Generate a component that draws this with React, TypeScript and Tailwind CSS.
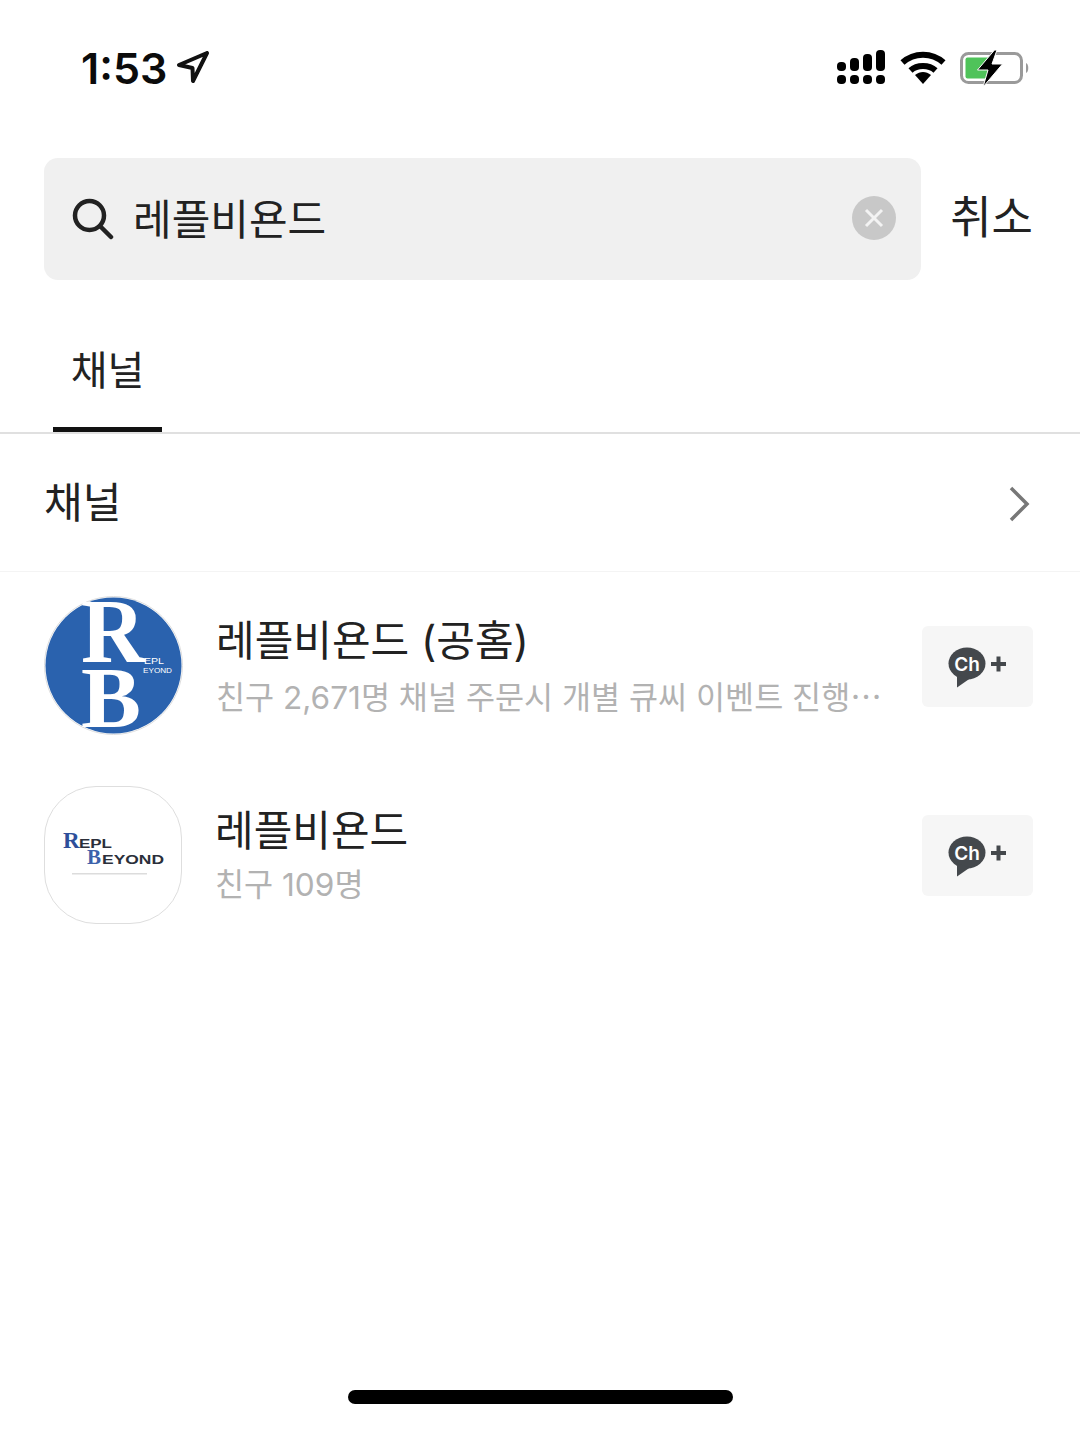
const KR = { fontFamily: '"Noto Sans CJK KR", "Noto Sans", sans-serif' };
const MIX = { fontFamily: 'Inter, "Noto Sans CJK KR", sans-serif' };

function Signal() {
  return (
    <svg width="50" height="36" viewBox="0 0 50 36" fill="#000">
      <rect x="1" y="12" width="9" height="9" rx="4" />
      <rect x="14" y="8" width="9" height="13" rx="4" />
      <rect x="27" y="4" width="9" height="17" rx="4" />
      <rect x="40" y="0" width="9" height="21" rx="4" />
      <rect x="1" y="25" width="9" height="9" rx="4" />
      <rect x="14" y="25" width="9" height="9" rx="4" />
      <rect x="27" y="25" width="9" height="9" rx="4" />
      <rect x="40" y="25" width="9" height="9" rx="4" />
    </svg>
  );
}

function Wifi() {
  return (
    <svg width="46" height="34" viewBox="0 0 46 34" fill="none" stroke="#000" strokeWidth="6">
      <path d="M2.5 11.5 C14 1 32 1 43.5 11.5" />
      <path d="M10.5 19.5 C17 13.5 29 13.5 35.5 19.5" />
      <path d="M15 24 L23 33 L31 24 C26 20 20 20 15 24 Z" fill="#000" stroke="none" />
    </svg>
  );
}

function Battery() {
  return (
    <svg width="72" height="42" viewBox="0 0 72 42" fill="none">
      <rect x="3.5" y="6.5" width="60" height="29" rx="7" stroke="#9a9a9a" strokeWidth="3" />
      <rect x="7.5" y="10.5" width="24" height="21" rx="2" fill="#4fc35a" />
      <path d="M68 16 C71 17 71 25 68 26 Z" fill="#9a9a9a" />
      <path d="M36.5 3 L19.5 23 L30 23 L25 40 L44.5 17 L34 17 L39 3 Z" fill="#000" stroke="#fff" strokeWidth="1" strokeLinejoin="round" />
    </svg>
  );
}

function ChButton() {
  return (
    <div className="w-[111px] h-[81px] bg-[#f6f6f6] rounded-[6px] flex items-center justify-center shrink-0">
      <svg width="60" height="46" viewBox="1 -2.5 60 46">
        <ellipse cx="20" cy="18" rx="18.5" ry="16" fill="#44484c" />
        <path d="M10 29 L10 42 L23 33 Z" fill="#44484c" />
        <text x="20" y="25" textAnchor="middle" fontSize="19" fontWeight="600" fill="#fff" fontFamily="Inter, sans-serif">Ch</text>
        <rect x="44" y="16.5" width="15" height="4" fill="#44484c" />
        <rect x="49.5" y="11" width="4" height="15" fill="#44484c" />
      </svg>
    </div>
  );
}

function LogoRB() {
  return (
    <svg width="139" height="139" viewBox="0 0 139 139" className="shrink-0">
      <circle cx="69.5" cy="69.5" r="69" fill="#fff" stroke="#dedede" strokeWidth="1" />
      <circle cx="69.5" cy="69.5" r="68" fill="#2a62ae" />
      <text x="37" y="66" fontFamily='"Liberation Serif", serif' fontWeight="700" fontSize="90" fill="#fff" textLength="64" lengthAdjust="spacingAndGlyphs">R</text>
      <text x="37" y="131" fontFamily='"Liberation Serif", serif' fontWeight="700" fontSize="86" fill="#fff" textLength="60" lengthAdjust="spacingAndGlyphs">B</text>
      <text x="100" y="68" fontFamily='"Liberation Sans", sans-serif' fontSize="9" fill="#fff" textLength="20" lengthAdjust="spacingAndGlyphs">EPL</text>
      <text x="99" y="77" fontFamily='"Liberation Sans", sans-serif' fontSize="8" fill="#fff" textLength="29" lengthAdjust="spacingAndGlyphs">EYOND</text>
    </svg>
  );
}

function LogoText() {
  return (
    <div className="w-[138px] h-[138px] rounded-[52px] border border-[#dedede] bg-white shrink-0 flex items-center justify-center">
      <svg width="120" height="60" viewBox="0 0 120 60">
        <text x="10" y="23" fontFamily='"Liberation Serif", serif' fontWeight="700" fontSize="23" fill="#2d4f9a">R</text>
        <text x="26" y="23" fontFamily='"Liberation Sans", sans-serif' fontWeight="700" fontSize="13" fill="#2b2f3a" textLength="33" lengthAdjust="spacingAndGlyphs">EPL</text>
        <text x="34" y="39" fontFamily='"Liberation Serif", serif' fontWeight="700" fontSize="21" fill="#3c62ab">B</text>
        <text x="49" y="39" fontFamily='"Liberation Sans", sans-serif' fontWeight="700" fontSize="13" fill="#2b2f3a" textLength="62" lengthAdjust="spacingAndGlyphs">EYOND</text>
        <rect x="19" y="48" width="75" height="1.5" fill="#dcdcdc" />
      </svg>
    </div>
  );
}

function Row({ logo, name, sub, more }: { logo: React.ReactNode; name: string; sub: string; more?: boolean }) {
  return (
    <div className="flex items-center pl-[44px] pr-[47px] h-[139px]">
      {logo}
      <div className="ml-[33px] flex-1 min-w-0 flex flex-col" style={MIX}>
        <div className="text-[42px] leading-[50px] text-[#222] mt-[2px]">{name}</div>
        <div className="text-[31.6px] leading-[40px] mt-[9px] text-[#b2b2b2] whitespace-nowrap">
          {sub}
          {more && <span style={KR}>…</span>}
        </div>
      </div>
      <div className="ml-[40px] flex mt-[1px]"><ChButton /></div>
    </div>
  );
}

export default function App() {
  return (
    <div className="w-[1080px] h-[1440px] bg-white flex flex-col overflow-hidden" style={KR}>
      <div className="h-[138px] flex items-center justify-between pl-[81px] pr-[50px] pb-[2px]">
        <div className="flex items-center gap-[9px]">
          <span className="text-[43px] leading-none font-semibold text-[#0b0b0b]" style={{ fontFamily: 'Inter, sans-serif' }}>1:53</span>
          <svg width="34" height="34" viewBox="0 0 34 34" fill="none" stroke="#111" strokeWidth="4" strokeLinejoin="round" strokeLinecap="round">
            <path d="M3 14 L31 2 L17 30 L16.5 17 Z" />
          </svg>
        </div>
        <div className="flex items-center gap-[14px]">
          <Signal />
          <Wifi />
          <div className="-ml-[2px]"><Battery /></div>
        </div>
      </div>

      <div className="mt-[20px] flex items-center pl-[44px] pr-[47px]">
        <div className="w-[877px] h-[122px] rounded-[14px] bg-[#f0f0f0] flex items-center pl-[28px] pr-[25px]">
          <svg width="42" height="42" viewBox="0 0 42 42" fill="none" stroke="#222" strokeWidth="4.5" strokeLinecap="round">
            <circle cx="17.5" cy="17.5" r="14.5" />
            <path d="M28 28 L39 39" />
          </svg>
          <span className="ml-[19px] text-[42px] leading-none text-[#222] -mt-[4px]">레플비욘드</span>
          <div className="ml-auto w-[44px] h-[44px] rounded-full bg-[#c8c8c8] flex items-center justify-center -mt-[3px]">
            <svg width="22" height="22" viewBox="0 0 22 22" stroke="#f3f3f3" strokeWidth="3">
              <path d="M3 3 L19 19 M19 3 L3 19" />
            </svg>
          </div>
        </div>
        <span className="ml-auto text-[45px] leading-none text-[#222] -mt-[9px]">취소</span>
      </div>

      <div className="mt-[47px] h-[107px] border-b-2 border-[#e0e0e0] pl-[53px] flex">
        <div className="w-[109px] h-[105px] border-b-[5px] border-[#111] flex justify-center pt-[15px]">
          <span className="text-[40px] leading-[52px] text-[#222]">채널</span>
        </div>
      </div>

      <div className="h-[138px] border-b border-[#f4f4f4] flex items-center justify-between pl-[44px] pr-[48px]">
        <span className="text-[42px] leading-none text-[#222] -mt-[5px]">채널</span>
        <svg width="24" height="36" viewBox="0 0 24 36" fill="none" stroke="#777" strokeWidth="3.5" className="mr-[1px] mt-[2px]">
          <path d="M4 2 L20 18 L4 34" />
        </svg>
      </div>

      <div className="flex flex-col gap-[50px] mt-[24px]">
        <Row logo={<LogoRB />} name="레플비욘드 (공홈)" sub="친구 2,671명 채널 주문시 개별 큐씨 이벤트 진행" more />
        <Row logo={<LogoText />} name="레플비욘드" sub="친구 109명" />
      </div>

      <div className="mt-auto mb-[36px] mx-auto w-[385px] h-[14px] rounded-full bg-black" />
    </div>
  );
}
